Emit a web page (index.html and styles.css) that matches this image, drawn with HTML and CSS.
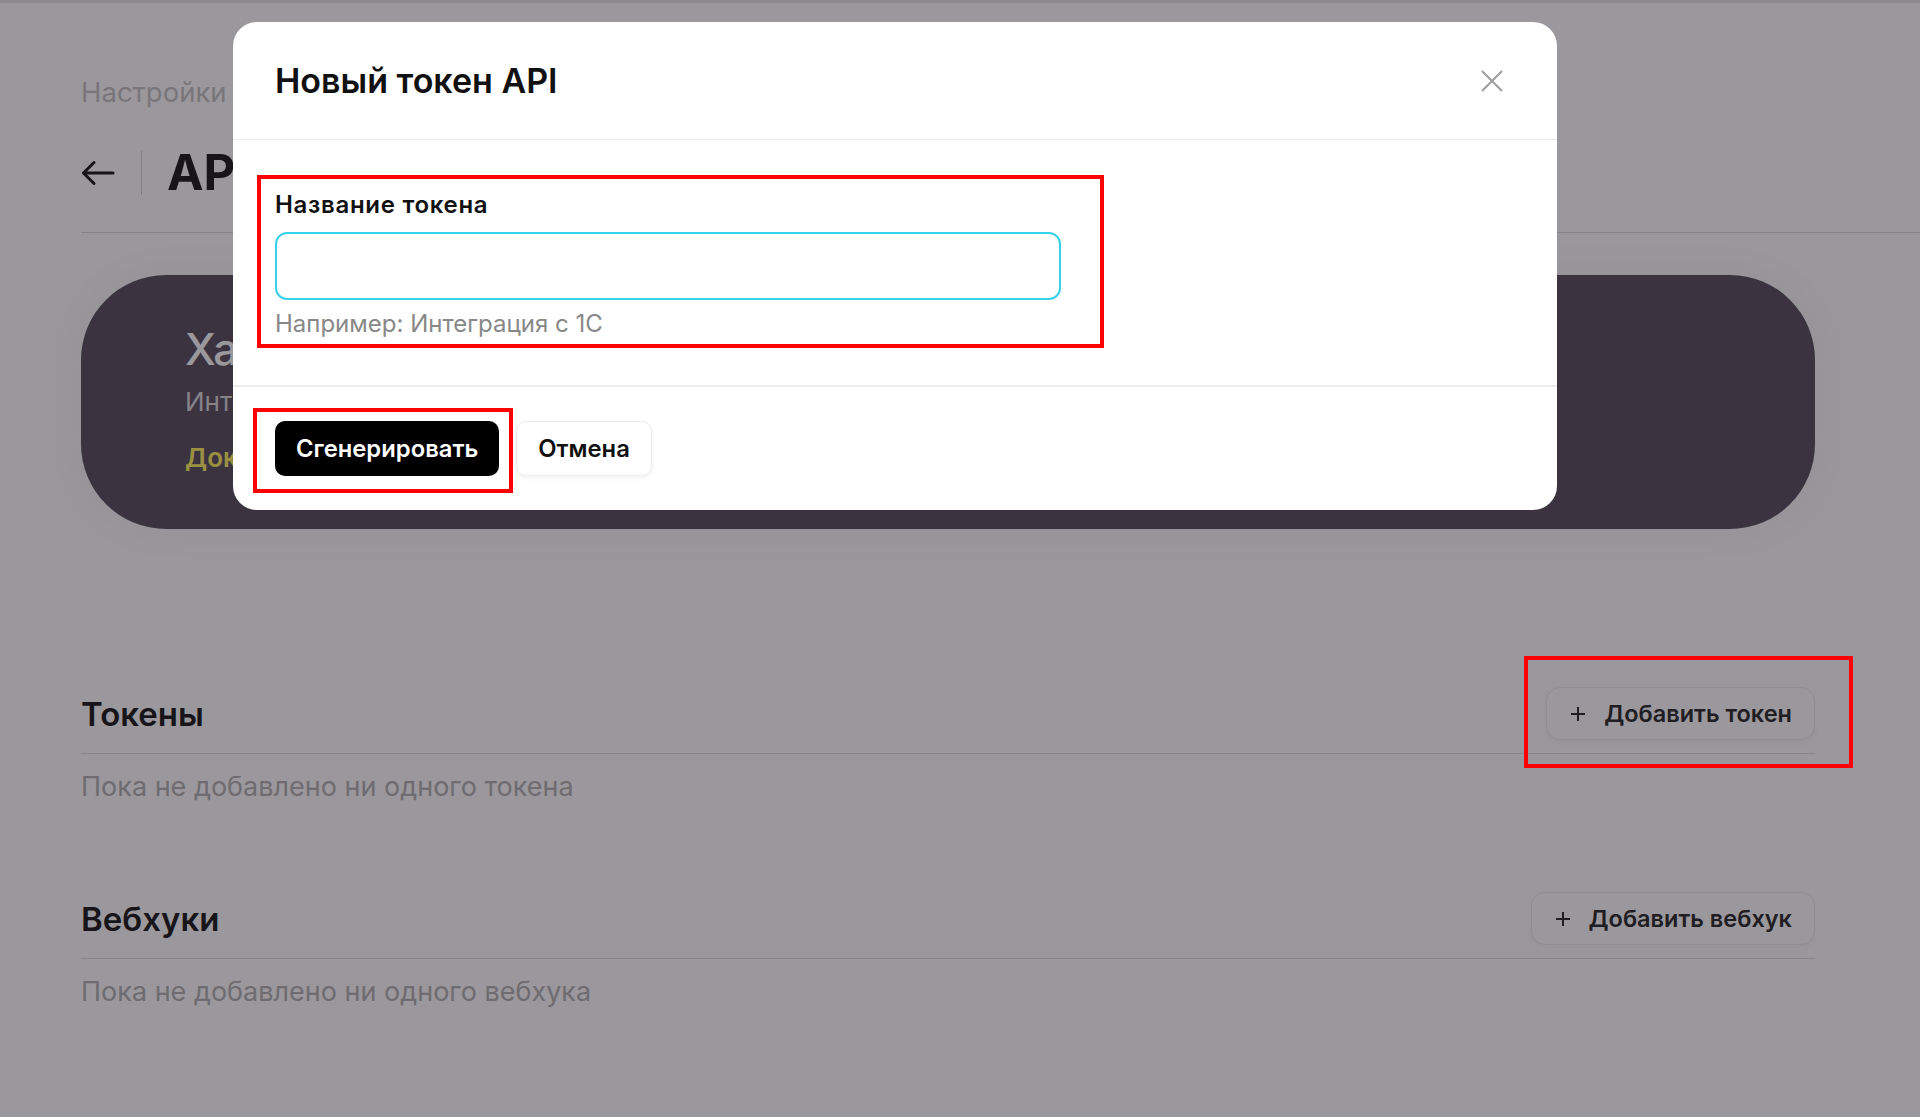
FILE: index.html
```html
<!DOCTYPE html>
<html lang="ru">
<head>
    <meta charset="UTF-8">
    <meta name="viewport" content="width=device-width, initial-scale=1.0">
    <title>API и вебхуки</title>
    <link rel="stylesheet" href="styles.css">
</head>
<body>
    <div class="topline"></div>

    <div class="page_head">
        <div class="crumbs">Настройки</div>
        <div class="title_row">
            <a class="back" href="#">
                <svg width="34" height="26" viewBox="0 0 34 26" fill="none" stroke="currentColor" stroke-width="3" stroke-linecap="round" stroke-linejoin="round">
                    <path d="M32 13H3"/>
                    <path d="M13 2.5L2.5 13L13 23.5"/>
                </svg>
            </a>
            <span class="title_sep"></span>
            <h1>API</h1>
        </div>
    </div>

    <div class="content">
        <div class="promo">
            <div class="promo_title">Хаб</div>
            <div class="promo_text">Интеграции с внешними системами</div>
            <a class="promo_link" href="#">Доки</a>
        </div>

        <section class="block block_first">
            <div class="block_head">
                <h2>Токены</h2>
                <button class="add_btn" type="button">
                    <svg width="14" height="14" viewBox="0 0 14 14" stroke="currentColor" stroke-width="2"><path d="M7 0v14M0 7h14"/></svg>
                    Добавить токен
                </button>
            </div>
            <p class="block_empty">Пока не добавлено ни одного токена</p>
        </section>

        <section class="block">
            <div class="block_head">
                <h2>Вебхуки</h2>
                <button class="add_btn" type="button">
                    <svg width="14" height="14" viewBox="0 0 14 14" stroke="currentColor" stroke-width="2"><path d="M7 0v14M0 7h14"/></svg>
                    Добавить вебхук
                </button>
            </div>
            <p class="block_empty">Пока не добавлено ни одного вебхука</p>
        </section>
    </div>

    <!-- затемнение под окном -->
    <div class="modal_overlay"></div>

    <div class="modal">
        <div class="modal_head">
            <h3>Новый токен API</h3>
            <button class="modal_close" type="button">
                <svg width="22" height="22" viewBox="0 0 22 22" stroke="currentColor" stroke-width="2"><path d="M1 1l20 20M21 1L1 21"/></svg>
            </button>
        </div>
        <form class="modal_body">
            <label class="field_label" for="tokenName">Название токена</label>
            <input class="field_input" type="text" id="tokenName">
            <div class="field_hint">Например: Интеграция с 1С</div>
        </form>
        <div class="modal_foot">
            <button class="btn btn_dark" type="button">Сгенерировать</button>
            <button class="btn btn_light" type="button">Отмена</button>
        </div>
    </div>

    <!-- красные рамки-пометки -->
    <div class="mark mark_field"></div>
    <div class="mark mark_generate"></div>
    <div class="mark mark_add"></div>
</body>
</html>
```

FILE: styles.css
```css
* {
    box-sizing: border-box;
}
body {
    margin: 0;
    background-color: #fff;
    font-family: Inter, "Noto Sans", sans-serif;
    color: #111;
    min-height: 1117px;
}
button {
    font-family: inherit;
    cursor: pointer;
}
.topline {
    height: 3px;
    background-color: #e4e4e4;
}

/* шапка страницы */
.page_head {
    margin-left: 81px;
    padding-top: 73px;
    padding-bottom: 31px;
    border-bottom: 1px solid #d9d9d9;
}
.crumbs {
    font-size: 27.5px;
    line-height: 32px;
    color: #c2c2c2;
}
.title_row {
    display: flex;
    align-items: center;
    margin-top: 37px;
    height: 56px;
}
.back {
    display: flex;
    color: #111;
}
.title_sep {
    width: 1px;
    height: 44px;
    background-color: #d6d6d6;
    margin: 0 25px 0 26px;
}
.title_row h1 {
    margin: 0;
    font-size: 49px;
    font-weight: 700;
    line-height: 56px;
}

.content {
    padding: 0 105px 0 81px;
}

/* тёмная плашка */
.promo {
    margin-top: 42px;
    height: 254px;
    padding: 48px 104px 0;
    background-color: #524a58;
    border-radius: 85px;
    box-shadow: 0 0 40px rgba(0, 0, 0, 0.06);
}
.promo_title {
    font-size: 44px;
    font-weight: 500;
    line-height: 52px;
    color: #fff;
}
.promo_text {
    margin-top: 10px;
    font-size: 26px;
    line-height: 34px;
    color: rgba(255, 255, 255, 0.8);
}
.promo_link {
    display: inline-block;
    margin-top: 22px;
    font-size: 26px;
    font-weight: 600;
    line-height: 34px;
    color: #fff05a;
    text-decoration: none;
}

/* секции токенов и вебхуков */
.block {
    margin-top: 87px;
}
.block_first {
    margin-top: 158px;
}
.block_head {
    display: flex;
    justify-content: space-between;
    align-items: center;
    padding-bottom: 13px;
    border-bottom: 1px solid #dcdcdc;
}
.block_head h2 {
    margin: 0;
    font-size: 33px;
    font-weight: 600;
}
.block_empty {
    margin: 15px 0 0;
    font-size: 27px;
    line-height: 36px;
    color: #afafb0;
}
.add_btn {
    display: flex;
    align-items: center;
    gap: 19px;
    height: 53px;
    padding: 0 22px 0 24px;
    background-color: #fff;
    border: 1px solid #ececec;
    border-radius: 14px;
    box-shadow: 0 2px 6px rgba(0, 0, 0, 0.05);
    font-size: 23.5px;
    font-weight: 600;
    color: #222;
}

/* модальное окно */
.modal_overlay {
    position: fixed;
    top: 0;
    left: 0;
    width: 100%;
    height: 100%;
    background-color: rgba(30, 27, 36, 0.45);
    z-index: 10;
}
.modal {
    position: fixed;
    top: 22px;
    left: 233px;
    width: 1324px;
    background-color: #fff;
    border-radius: 24px;
    z-index: 11;
}
.modal_head {
    display: flex;
    justify-content: space-between;
    align-items: center;
    height: 118px;
    padding: 0 54px 0 42px;
    border-bottom: 1px solid #ececec;
}
.modal_head h3 {
    margin: 0;
    font-size: 34px;
    font-weight: 600;
}
.modal_close {
    display: flex;
    padding: 0;
    border: none;
    background: none;
    color: #9c9c9c;
}
.modal_body {
    display: flex;
    flex-direction: column;
    align-items: flex-start;
    margin: 0;
    padding: 51px 42px 47px;
}
.field_label {
    font-size: 24px;
    font-weight: 600;
    line-height: 28px;
    letter-spacing: 0.7px;
}
.field_input {
    width: 786px;
    height: 68px;
    margin-top: 13px;
    border: 2px solid #35d2ea;
    border-radius: 12px;
    outline: none;
    font-family: inherit;
    font-size: 22px;
    padding: 0 18px;
}
.field_hint {
    margin-top: 10px;
    font-size: 24px;
    line-height: 28px;
    color: #888;
}
.modal_foot {
    display: flex;
    gap: 17px;
    padding: 34px 42px 34px;
    border-top: 2px solid #ececec;
}
.btn {
    height: 55px;
    padding: 0 21px;
    border-radius: 10px;
    font-size: 23.8px;
    font-weight: 600;
}
.btn_dark {
    background-color: #000;
    color: #fff;
    border: none;
}
.btn_light {
    background-color: #fff;
    color: #111;
    border: 1px solid #ececec;
    box-shadow: 0 2px 5px rgba(0, 0, 0, 0.06);
}

/* пометки поверх интерфейса */
.mark {
    position: absolute;
    border: 4px solid #ff0000;
    z-index: 20;
}
.mark_field {
    top: 175px;
    left: 257px;
    width: 847px;
    height: 173px;
}
.mark_generate {
    top: 408px;
    left: 253px;
    width: 260px;
    height: 85px;
}
.mark_add {
    top: 656px;
    left: 1524px;
    width: 329px;
    height: 112px;
}
```
